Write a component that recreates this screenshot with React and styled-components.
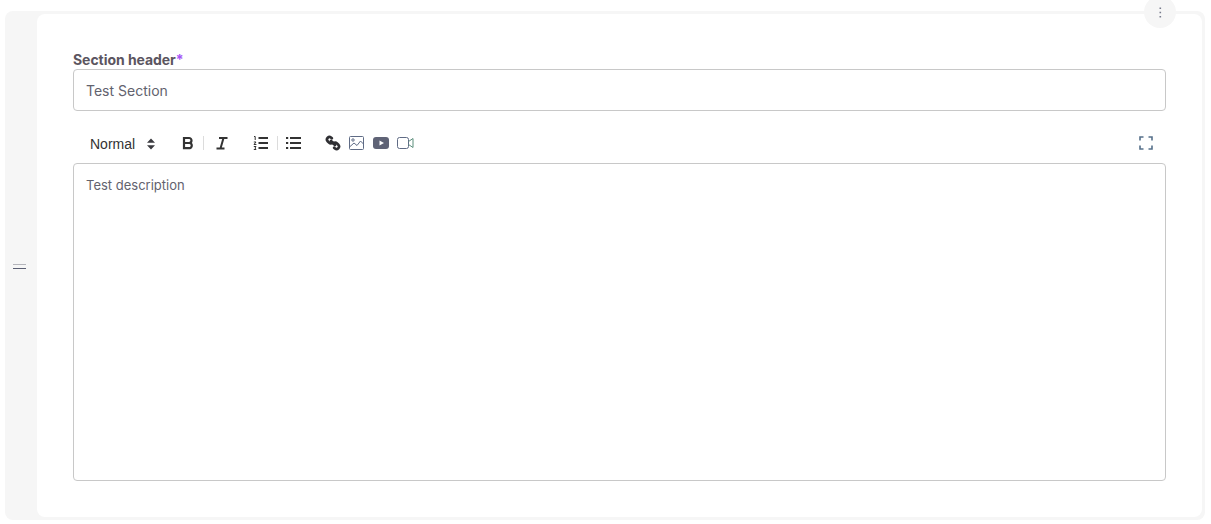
import React from "react";
import styled, { createGlobalStyle } from "styled-components";

const Global = createGlobalStyle`
  html, body { margin: 0; padding: 0; background: #fff; }
  body { font-family: Inter, "Liberation Sans", sans-serif; }
`;
const Page = styled.div`
  width: 1211px; height: 524px; box-sizing: border-box; padding: 11px 6px 4px 5px; overflow: hidden;
`;
const Card = styled.section`
  position: relative; height: 509px; box-sizing: border-box; display: flex;
  background: #f6f6f6; border-radius: 8px; padding: 3px 3px 3px 0;
`;
const Handle = styled.div`
  width: 32px; flex: none; display: flex; align-items: center; justify-content: flex-start;
  padding-left: 8px; box-sizing: border-box;
`;
const HandleBars = styled.div`
  width: 13px; height: 5px; margin-top: 2px; box-sizing: border-box;
  border-top: 1px solid #b4b5bb; border-bottom: 1px solid #5b5f73;
`;
const Body = styled.div`
  flex: 1; background: #fff; border-radius: 8px; padding: 37px 36px 0; box-sizing: border-box;
  display: flex; flex-direction: column;
`;
const Menu = styled.button`
  position: absolute; top: -15px; right: 29px; width: 32px; height: 32px; padding: 0; border: 0;
  border-radius: 50%; background: #f6f6f6; display: flex; align-items: center; justify-content: center;
`;
const Label = styled.label`
  font-size: 14px; font-weight: 700; line-height: 17px; height: 18px; color: #5b5560; letter-spacing: -0.05px;
`;
const Star = styled.span` color: #a855f7; `;
const Input = styled.div`
  height: 42px; box-sizing: border-box; border: 1px solid #c8c8c8; border-radius: 4px;
  padding: 0 12px; display: flex; align-items: center; font-size: 14px; color: #62626e;
`;
const Toolbar = styled.div`
  height: 38px; margin-top: 14px; padding: 0 13px 2px 17px; box-sizing: border-box; display: flex; align-items: center;
  color: #444;
`;
const Picker = styled.div`
  width: 76px; flex: none; display: flex; align-items: center; gap: 12px;
  font-family: "Liberation Sans", sans-serif; font-size: 14px; color: #333; padding-top: 2px; box-sizing: border-box;
`;
const Group = styled.div`
  display: flex; align-items: center; margin-left: ${p => p.$ml}px; gap: ${p => p.$gap || 0}px;
`;
const Sep = styled.span`
  width: 1px; height: 14px; background: #dcdcdc; margin: 0 ${p => p.$m}px;
`;
const Icon = styled.svg`
  display: block; flex: none;
`;
const Spacer = styled.div` flex: 1; `;
const Editor = styled.div`
  height: 318px; box-sizing: border-box; border: 1px solid #c8c8c8; border-radius: 4px;
  padding: 13px 12px; font-size: 13px; line-height: 16px; color: #62626e;
`;

export default function App() {
  return (
    <Page>
      <Global />
      <Card>
        <Handle><HandleBars /></Handle>
        <Body>
          <Label>Section header<Star>*</Star></Label>
          <Input>Test Section</Input>
          <Toolbar>
            <Picker>
              Normal
              <Icon width="8" height="12" viewBox="0 0 8 12"><path d="M4 0.5 8 4.800H0zM4 11.500 0 7.200h8z" fill="#3a3a3f" /></Icon>
            </Picker>
            <Group $ml={15}>
              <Icon width="14" height="14" viewBox="0 0 14 14" fill="none" stroke="#333" strokeWidth="2.200">
                <path d="M3 2h5a2.500 2.500 0 0 1 0 5H3zM3 7h5.800a2.700 2.700 0 0 1 0 5.200H3zM3 1v12.200" />
              </Icon>
              <Sep $m={8} />
              <Icon style={{ marginLeft: 3 }} width="14" height="14" viewBox="0 0 14 14" fill="none" stroke="#333" strokeWidth="2">
                <path d="M4 2h8.500M1.500 12.500h8M8.500 2 5.500 12.500" />
              </Icon>
            </Group>
            <Group $ml={24}>
              <Icon width="16" height="16" viewBox="0 0 16 16" fill="none">
                <path d="M5.500 3h9.500M5.500 8h9.500M5.500 13h9.500" stroke="#333" strokeWidth="2" />
                <path d="M1 1.500h1.200v3.500M.8 7h2.200l-2 2.500h2.400M.8 11.500h2.200l-1 1.500 1 1.500H.8" stroke="#333" strokeWidth="1" />
              </Icon>
              <Sep $m={8} />
              <Icon width="16" height="16" viewBox="0 0 16 16" fill="none" stroke="#333" strokeWidth="2">
                <path d="M4 3h11M4 8h11M4 13h11M0 3h2.200M0 8h2.200M0 13h2.200" />
              </Icon>
            </Group>
            <Group $ml={23} $gap={8}>
              <Icon width="16" height="16" viewBox="0 0 16 16" fill="none" stroke="#2f2f33" strokeWidth="2.700" strokeLinecap="round">
                <path d="M6.800 3.300 6 2.500a2.500 2.500 0 0 0-3.500 3.500L4 7.500a2.500 2.500 0 0 0 3.500 0" />
                <path d="M9.200 12.700l.8.800a2.500 2.500 0 0 0 3.500-3.500L12 8.500a2.500 2.500 0 0 0-3.500 0" />
                <path d="M6 6l4 4" />
              </Icon>
              <Icon width="15" height="14" viewBox="0 0 15 14" fill="none" stroke="#5f6b85" strokeWidth="1">
                <rect x=".5" y=".5" width="14" height="13" rx="1" />
                <circle cx="4" cy="4" r="1.200" />
                <path d="M.5 11 5 7l3 2.500L11.500 5l3 3" />
              </Icon>
              <Icon style={{ marginLeft: 1 }} width="16" height="12" viewBox="0 0 16 12">
                <rect width="16" height="12" rx="3" fill="#5f6376" />
                <path d="M6.500 3.500 11 6l-4.500 2.500z" fill="#fff" />
              </Icon>
              <Icon width="17" height="12" viewBox="0 0 17 12" fill="none" strokeWidth="1">
                <rect x=".5" y=".5" width="11" height="11" rx="2" stroke="#5f6b85" />
                <path d="M11.500 4.500 16 1.500v9l-4.500-3" stroke="#5d8f7d" />
              </Icon>
            </Group>
            <Spacer />
            <Icon width="14" height="14" viewBox="0 0 14 14" fill="none" stroke="#56708a" strokeWidth="1.600">
              <path d="M1 4.500V1h3.500M9.500 1H13v3.500M13 9.500V13H9.500M4.500 13H1V9.500" />
            </Icon>
          </Toolbar>
          <Editor>Test description</Editor>
        </Body>
        <Menu aria-label="More">
          <Icon width="3" height="11" viewBox="0 0 3 11"><path d="M.5 .5h1.600v1.600H.5zM.5 4.700h1.600v1.600H.5zM.5 8.900h1.600v1.600H.5z" fill="#777b8c" /></Icon>
        </Menu>
      </Card>
    </Page>
  );
}
